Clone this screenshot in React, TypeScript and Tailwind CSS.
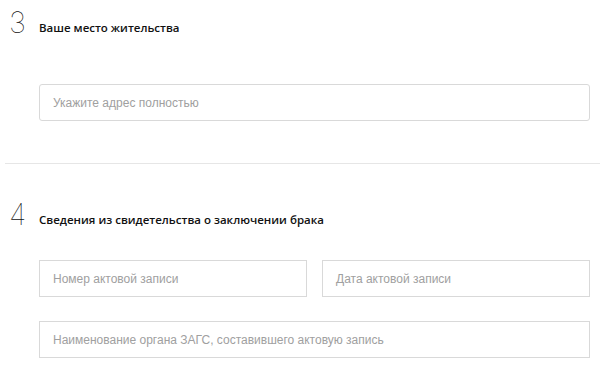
import React from "react";

function Num({ n }: { n: string }) {
  return (
    <span className="w-[34px] pl-[4px] -mt-[2px] text-[29px] leading-none font-thin text-[#111] [font-family:Inter,sans-serif]">
      {n}
    </span>
  );
}

function Field({ ph, className = "" }: { ph: string; className?: string }) {
  return (
    <div
      className={`h-[37px] border border-[#d9d9d9] bg-white flex items-center pl-[13px] text-[12px] text-[#a0a0a0] [font-family:'Liberation_Sans',Arial,sans-serif] ${className}`}
    >
      {ph}
    </div>
  );
}

export default function App() {
  return (
    <div className="w-[600px] h-[372px] bg-white overflow-hidden">
      <div className="pl-[5px] pt-[10px]">
        <div className="flex items-start h-[22px]">
          <Num n="3" />
          <span className="mt-[9px] text-[11.5px] font-semibold text-[#111] [font-family:'Open_Sans',sans-serif]">
            Ваше место жительства
          </span>
        </div>
        <div className="pl-[34px] pr-[10px] mt-[52px]">
          <Field ph="Укажите адрес полностью" className="rounded-[3px]" />
        </div>
      </div>
      <div className="ml-[5px] mt-[42px] border-t border-[#e6e6e6]" />
      <div className="pl-[5px] pt-[38px]">
        <div className="flex items-start h-[22px]">
          <Num n="4" />
          <span className="mt-[9px] text-[11.5px] font-semibold text-[#111] [font-family:'Open_Sans',sans-serif]">
            Сведения из свидетельства о заключении брака
          </span>
        </div>
        <div className="pl-[34px] pr-[10px] mt-[36px] flex flex-col gap-[24px]">
          <div className="flex gap-[15px]">
            <Field ph="Номер актовой записи" className="flex-1" />
            <Field ph="Дата актовой записи" className="flex-1" />
          </div>
          <Field ph="Наименование органа ЗАГС, составившего актовую запись" />
        </div>
      </div>
    </div>
  );
}
